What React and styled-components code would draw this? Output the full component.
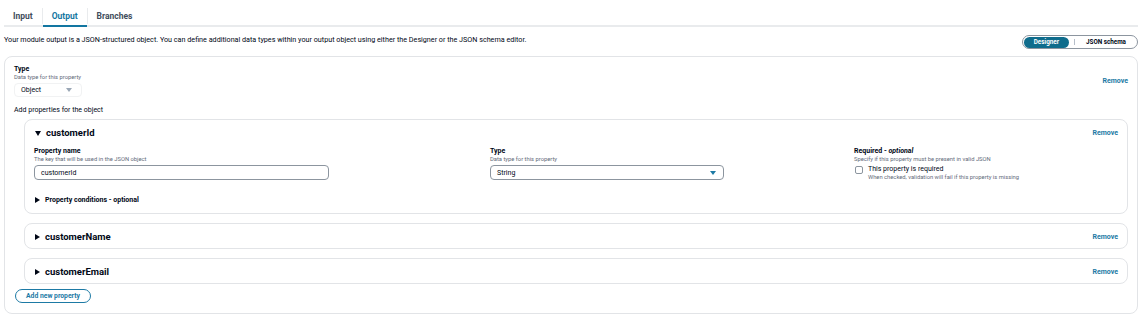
import styled, { createGlobalStyle } from 'styled-components';

const GlobalStyle = createGlobalStyle`
  html, body {
    margin: 0;
    padding: 0;
    background: #ffffff;
    font-family: Roboto, "Liberation Sans", sans-serif;
    color: #000716;
  }
`;

const Page = styled.div`
  padding: 0 10px 0 4px;
  width: 1148px;
  box-sizing: border-box;
`;

const TabBar = styled.div`
  display: flex;
  align-items: stretch;
  height: 25px;
  border-bottom: 2px solid #e9ebed;
`;

const Tab = styled.div`
  position: relative;
  display: flex;
  align-items: center;
  padding: 0 9px;
  font-size: 8.5px;
  font-weight: 700;
  color: ${(p) => (p.$active ? '#1276a1' : '#414d5c')};
  border-left: ${(p) => (p.$first ? 'none' : '1px solid #e9ebed')};
  height: 16px;
  margin-top: 8px;

  &::after {
    content: '';
    display: ${(p) => (p.$active ? 'block' : 'none')};
    position: absolute;
    left: 0;
    right: 0;
    bottom: -3px;
    height: 2px;
    background: #1276a1;
  }
`;

const IntroRow = styled.div`
  display: flex;
  align-items: flex-start;
  justify-content: space-between;
  margin-top: 8px;
`;

const Intro = styled.p`
  margin: 0;
  font-size: 7.2px;
  line-height: 10px;
  color: #000716;
`;

const Segmented = styled.div`
  display: flex;
  align-items: center;
  box-sizing: border-box;
  height: 14px;
  padding: 0 1px;
  border: 1px solid #8c959f;
  border-radius: 10px;
`;

const Segment = styled.div`
  display: flex;
  align-items: center;
  height: 11px;
  padding: 0 ${(p) => (p.$active ? '10px' : '10px')};
  border-radius: 8px;
  font-size: 6.3px;
  font-weight: 700;
  color: ${(p) => (p.$active ? '#ffffff' : '#000716')};
  background: ${(p) => (p.$active ? '#0f6c8c' : 'transparent')};
`;

const SegmentDivider = styled.span`
  width: 1px;
  height: 6px;
  background: #b6bec9;
  margin: 0 1px 0 5px;
`;

const Container = styled.div`
  margin-top: 7px;
  border: 1px solid #e2e4e7;
  border-radius: 8px;
  padding: 8px 9px 10px 9px;
`;

const TopRow = styled.div`
  display: flex;
  align-items: center;
  justify-content: space-between;
`;

const Field = styled.div`
  display: flex;
  flex-direction: column;
`;

const Label = styled.div`
  font-size: 7px;
  font-weight: 700;
  line-height: 9px;
  color: #000716;

  em {
    font-style: italic;
  }
`;

const Hint = styled.div`
  font-size: 5.8px;
  line-height: 7px;
  color: #5f6b7a;
`;

const RemoveLink = styled.span`
  font-size: 7px;
  line-height: 9px;
  font-weight: 700;
  color: #1d7aa5;
`;

const Select = styled.div`
  display: flex;
  align-items: center;
  justify-content: space-between;
  box-sizing: border-box;
  width: ${(p) => p.$width}px;
  height: ${(p) => (p.$plain ? 14 : 15)}px;
  margin-top: 2px;
  padding: 0 ${(p) => (p.$plain ? 9 : 7)}px 0 6px;
  border: 1px solid ${(p) => (p.$plain ? '#f1f2f3' : '#8c959f')};
  border-radius: 4px;
  font-size: 7px;
  color: #000716;
`;

const Caret = styled.span`
  width: 0;
  height: 0;
  border-left: 3px solid transparent;
  border-right: 3px solid transparent;
  border-top: 4px solid ${(p) => p.$color};
`;

const Input = styled.div`
  display: flex;
  align-items: center;
  box-sizing: border-box;
  width: 295px;
  height: 15px;
  margin-top: 2px;
  padding: 0 6px;
  border: 1px solid #8c959f;
  border-radius: 4px;
  font-size: 7px;
  color: #000716;
`;

const SectionNote = styled.div`
  margin-top: 9px;
  font-size: 7px;
  line-height: 9px;
  color: #000716;
`;

const PropertyList = styled.div`
  display: flex;
  flex-direction: column;
  gap: 9px;
  margin: 4px 0 0 10px;
`;

const Card = styled.div`
  border: 1px solid #e2e4e7;
  border-radius: 8px;
  padding: ${(p) => (p.$open ? '7px 9px 9px' : '7px 9px 5px')};
`;

const CardHeader = styled.div`
  display: flex;
  align-items: center;
  justify-content: space-between;
  height: 12px;
`;

const Toggle = styled.div`
  display: flex;
  align-items: center;
  gap: 5px;
  padding-left: 1px;
`;

const Arrow = styled.span`
  width: 0;
  height: 0;
  ${(p) =>
    p.$open
      ? `border-left: 3px solid transparent; border-right: 3px solid transparent; border-top: 5px solid #000716;`
      : `border-top: 3px solid transparent; border-bottom: 3px solid transparent; border-left: 5px solid #000716;`}
`;

const CardTitle = styled.span`
  font-size: 9.5px;
  line-height: 12px;
  font-weight: 700;
  color: #000716;
`;

const FieldGrid = styled.div`
  display: grid;
  grid-template-columns: 456px 364px 1fr;
  margin-top: 8px;
`;

const CheckRow = styled.div`
  display: flex;
  align-items: flex-start;
  gap: 5px;
  margin-top: 2px;
  padding-left: 1px;
`;

const Checkbox = styled.span`
  box-sizing: border-box;
  width: 8px;
  height: 8px;
  margin-top: 1px;
  border: 1px solid #8c959f;
  border-radius: 2px;
`;

const CheckText = styled.div`
  display: flex;
  flex-direction: column;
`;

const CheckLabel = styled.span`
  font-size: 7px;
  line-height: 9px;
  color: #000716;
`;

const Conditions = styled.div`
  display: flex;
  align-items: center;
  gap: 5px;
  height: 9px;
  margin-top: 14px;
  padding-left: 1px;
  font-size: 7px;
  font-weight: 700;
  color: #000716;
`;

const AddButton = styled.button`
  display: block;
  margin-top: 5px;
  margin-left: 1px;
  height: 14px;
  padding: 0 10px;
  background: #ffffff;
  border: 1px solid #1d7aa5;
  border-radius: 8px;
  font-family: inherit;
  font-size: 6.8px;
  font-weight: 700;
  color: #1d7aa5;
`;

const properties = [
  { name: 'customerId', open: true },
  { name: 'customerName', open: false },
  { name: 'customerEmail', open: false },
];

const PropertyCard = ({ name, open }) => (
  <Card $open={open}>
    <CardHeader>
      <Toggle>
        <Arrow $open={open} />
        <CardTitle>{name}</CardTitle>
      </Toggle>
      <RemoveLink>Remove</RemoveLink>
    </CardHeader>
    {open && (
      <>
        <FieldGrid>
          <Field>
            <Label>Property name</Label>
            <Hint>The key that will be used in the JSON object</Hint>
            <Input>{name}</Input>
          </Field>
          <Field>
            <Label>Type</Label>
            <Hint>Data type for this property</Hint>
            <Select $width={234}>
              String
              <Caret $color="#1d7aa5" />
            </Select>
          </Field>
          <Field>
            <Label>
              Required - <em>optional</em>
            </Label>
            <Hint>Specify if this property must be present in valid JSON</Hint>
            <CheckRow>
              <Checkbox />
              <CheckText>
                <CheckLabel>This property is required</CheckLabel>
                <Hint>When checked, validation will fail if this property is missing</Hint>
              </CheckText>
            </CheckRow>
          </Field>
        </FieldGrid>
        <Conditions>
          <Arrow />
          Property conditions - optional
        </Conditions>
      </>
    )}
  </Card>
);

const App = () => (
  <>
    <GlobalStyle />
    <Page>
      <TabBar>
        <Tab $first>Input</Tab>
        <Tab $active>Output</Tab>
        <Tab>Branches</Tab>
      </TabBar>
      <IntroRow>
        <Intro>
          Your module output is a JSON-structured object. You can define additional data types
          within your output object using either the Designer or the JSON schema editor.
        </Intro>
        <Segmented>
          <Segment $active>Designer</Segment>
          <SegmentDivider />
          <Segment>JSON schema</Segment>
        </Segmented>
      </IntroRow>
      <Container>
        <TopRow>
          <Field>
            <Label>Type</Label>
            <Hint>Data type for this property</Hint>
            <Select $width={68} $plain>
              Object
              <Caret $color="#9ba7b6" />
            </Select>
          </Field>
          <RemoveLink>Remove</RemoveLink>
        </TopRow>
        <SectionNote>Add properties for the object</SectionNote>
        <PropertyList>
          {properties.map((p) => (
            <PropertyCard key={p.name} {...p} />
          ))}
        </PropertyList>
        <AddButton>Add new property</AddButton>
      </Container>
    </Page>
  </>
);

export default App;
